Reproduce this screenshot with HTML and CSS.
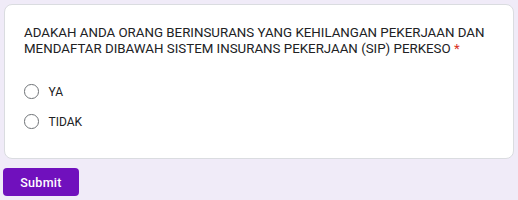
FILE: index.html
```html
<!DOCTYPE html>
<html>
<head>
<meta charset="utf-8">
<link rel="stylesheet" href="styles.css">
</head>
<body>
<div class="page">
  <div class="card">
    <div class="question">ADAKAH ANDA ORANG BERINSURANS YANG KEHILANGAN PEKERJAAN DAN MENDAFTAR DIBAWAH SISTEM INSURANS PEKERJAAN (SIP) PERKESO <span class="req">*</span></div>
    <div class="options">
      <label class="option"><span class="radio"></span><span class="opt-label">YA</span></label>
      <label class="option"><span class="radio"></span><span class="opt-label">TIDAK</span></label>
    </div>
  </div>
  <div class="actions">
    <button class="submit">Submit</button>
  </div>
</div>
</body>
</html>
```
FILE: styles.css
```css
html, body {
  margin: 0;
  padding: 0;
  background: #f0ebf8;
}
body {
  font-family: Roboto, "Noto Sans", Arial, sans-serif;
  color: #202124;
}
.page {
  padding: 4px 4px 0 3px;
}
.card {
  background: #fff;
  border: 1px solid #dadce0;
  border-radius: 8px;
  padding: 20px 20px 28px 19px;
  margin-left: 1px;
}
.question {
  font-size: 13.3px;
  line-height: 16px;
  letter-spacing: 0;
  color: #202124;
}
.req {
  color: #d93025;
}
.options {
  margin-top: 26px;
  display: flex;
  flex-direction: column;
  gap: 13px;
}
.option {
  display: flex;
  align-items: center;
  gap: 10px;
  height: 17px;
}
.radio {
  width: 12.5px;
  height: 12.5px;
  border: 1.4px solid #6f7377;
  border-radius: 50%;
  flex: none;
}
.opt-label {
  font-size: 12px;
  color: #202124;
}
.actions {
  margin-top: 9px;
}
.submit {
  background: #7010bd;
  color: #fff;
  border: none;
  border-radius: 4px;
  width: 76px;
  height: 28px;
  font-family: Roboto, Arial, sans-serif;
  font-size: 12.5px;
  font-weight: 500;
  letter-spacing: 0.3px;
  padding: 0;
}
```
